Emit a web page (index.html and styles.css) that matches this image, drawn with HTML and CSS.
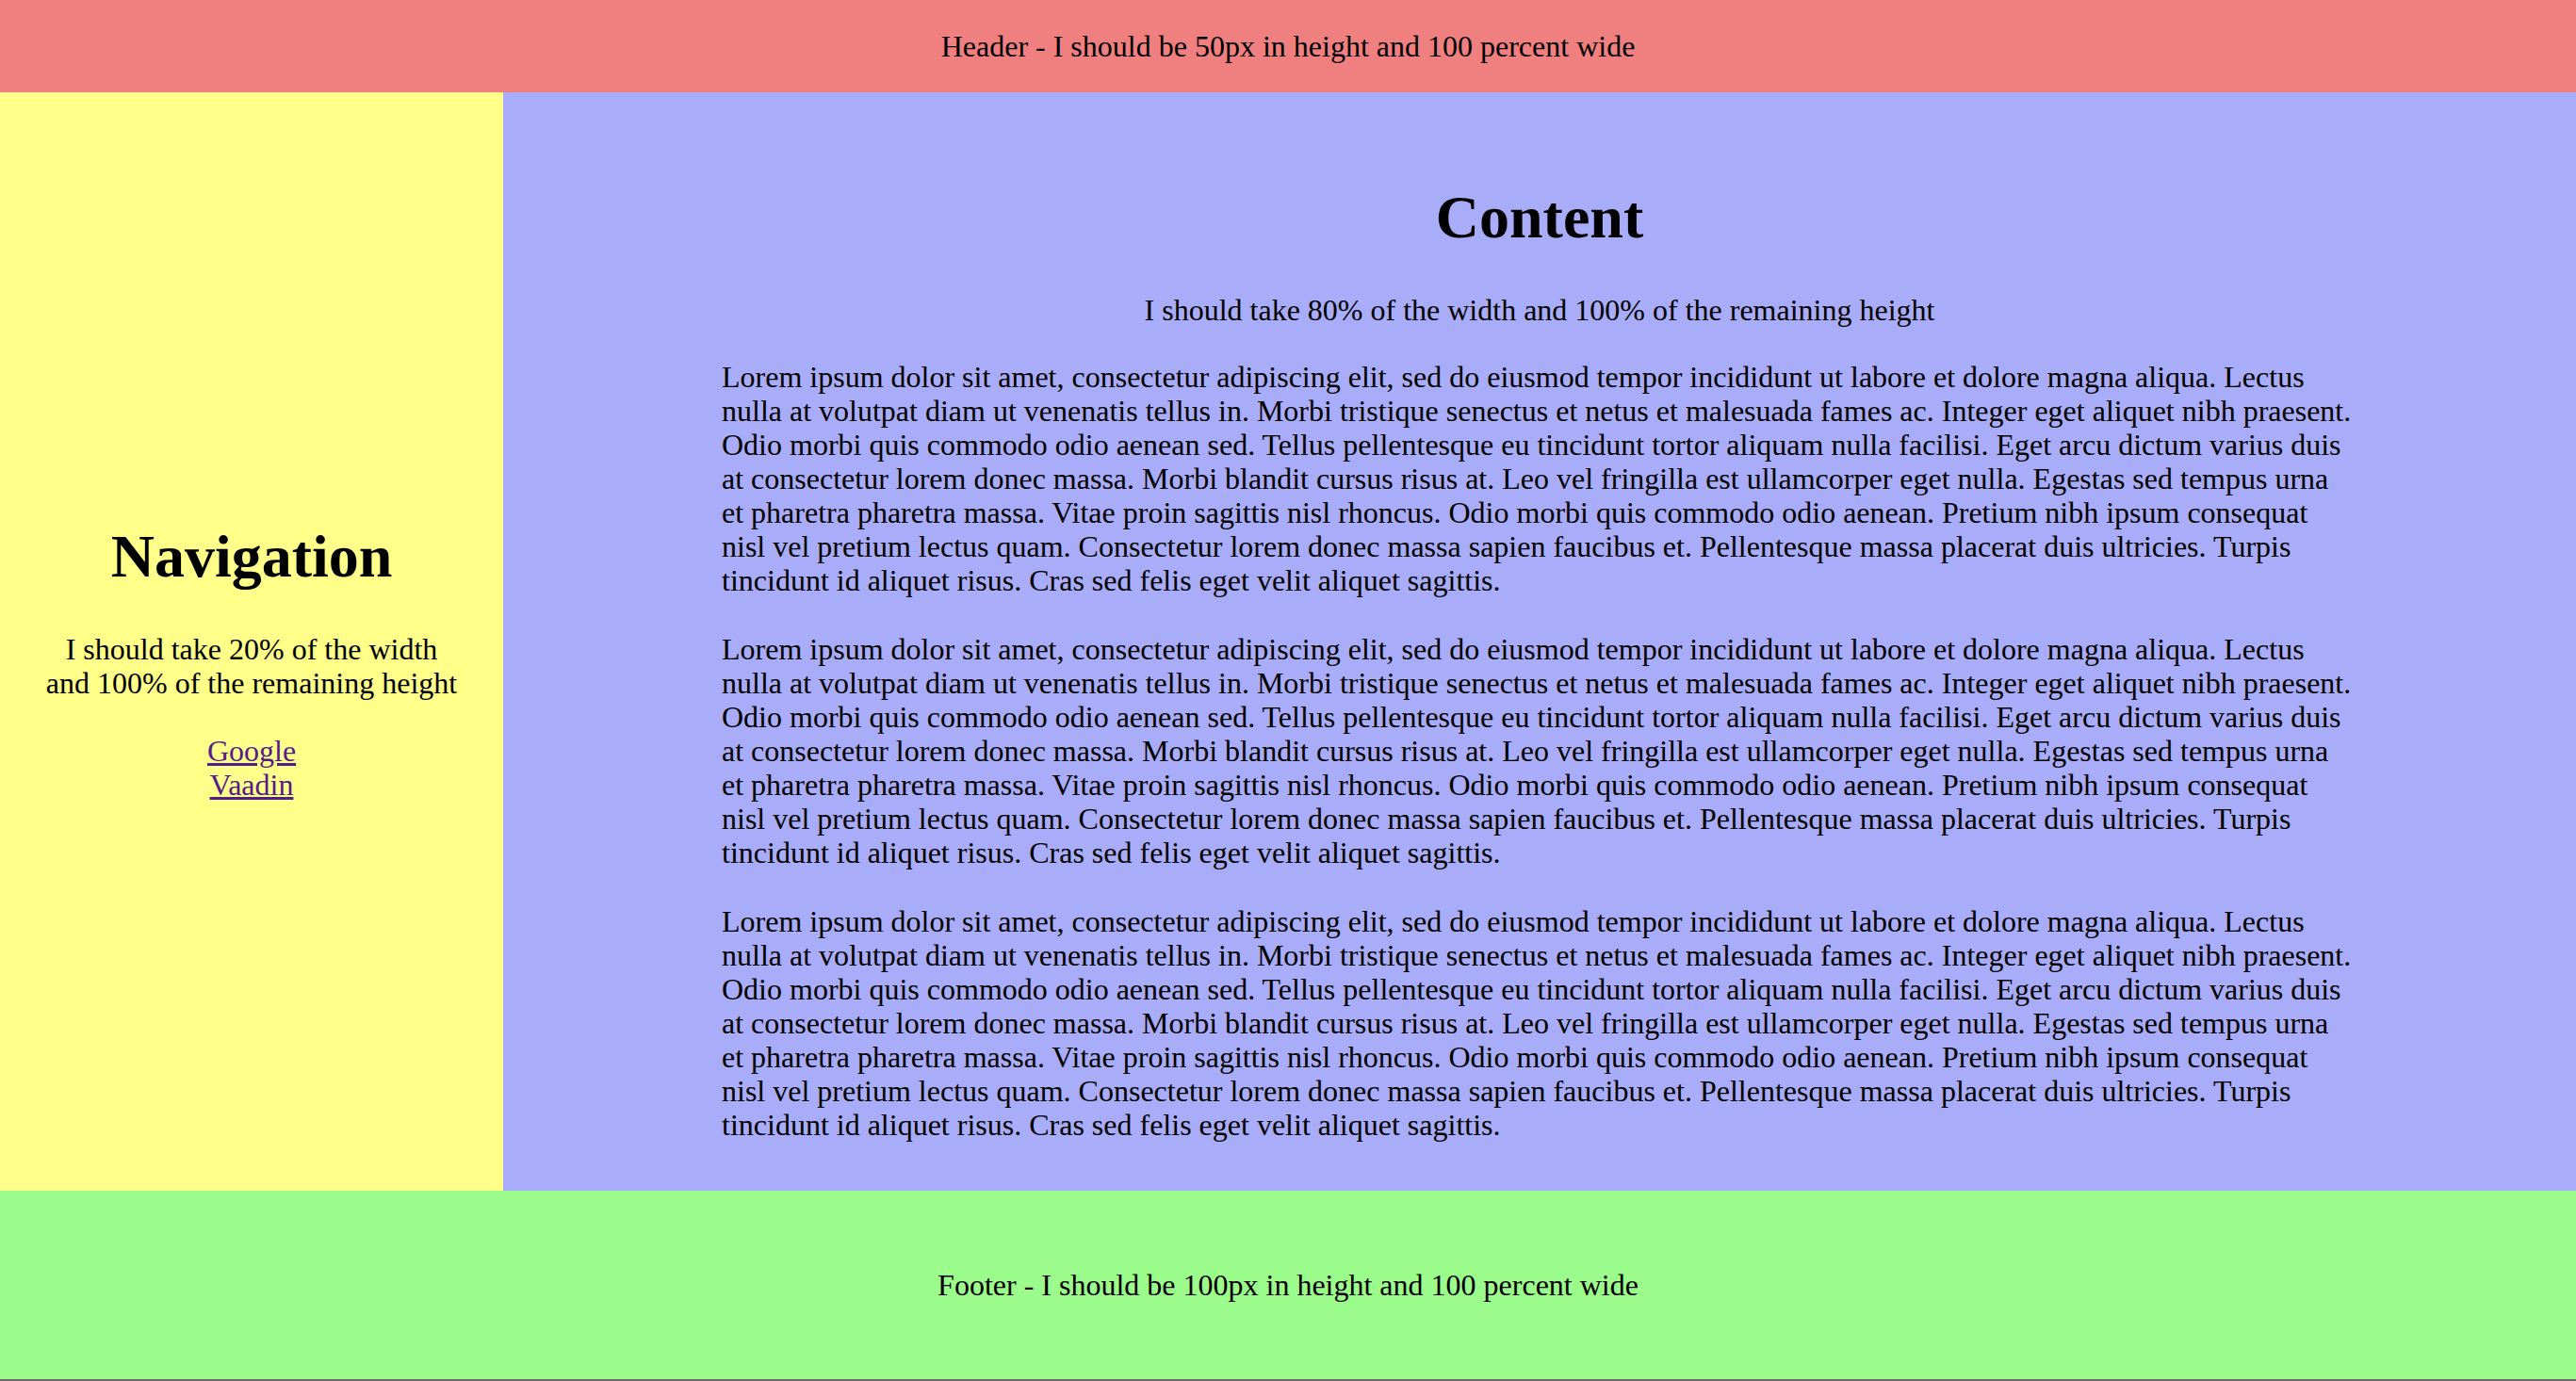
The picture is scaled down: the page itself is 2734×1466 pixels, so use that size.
FILE: index.html
```html
<!DOCTYPE html>
<html lang="en">
<head>
<meta charset="utf-8">
<title>Layout</title>
<link rel="stylesheet" href="styles.css">
</head>
<body>
<div class="page">
  <header class="header">Header - I should be 50px in height and 100 percent wide</header>
  <div class="middle">
    <nav class="nav">
      <h1 class="title">Navigation</h1>
      <p class="nav-text">I should take 20% of the width and 100% of the remaining height</p>
      <div class="links">
        <a class="link" href="#">Google</a>
        <a class="link" href="#">Vaadin</a>
      </div>
    </nav>
    <main class="content">
      <h1 class="title">Content</h1>
      <p class="subtitle">I should take 80% of the width and 100% of the remaining height</p>
      <p class="para">Lorem ipsum dolor sit amet, consectetur adipiscing elit, sed do eiusmod tempor incididunt ut labore et dolore magna aliqua. Lectus nulla at volutpat diam ut venenatis tellus in. Morbi tristique senectus et netus et malesuada fames ac. Integer eget aliquet nibh praesent. Odio morbi quis commodo odio aenean sed. Tellus pellentesque eu tincidunt tortor aliquam nulla facilisi. Eget arcu dictum varius duis at consectetur lorem donec massa. Morbi blandit cursus risus at. Leo vel fringilla est ullamcorper eget nulla. Egestas sed tempus urna et pharetra pharetra massa. Vitae proin sagittis nisl rhoncus. Odio morbi quis commodo odio aenean. Pretium nibh ipsum consequat nisl vel pretium lectus quam. Consectetur lorem donec massa sapien faucibus et. Pellentesque massa placerat duis ultricies. Turpis tincidunt id aliquet risus. Cras sed felis eget velit aliquet sagittis.</p>
      <p class="para">Lorem ipsum dolor sit amet, consectetur adipiscing elit, sed do eiusmod tempor incididunt ut labore et dolore magna aliqua. Lectus nulla at volutpat diam ut venenatis tellus in. Morbi tristique senectus et netus et malesuada fames ac. Integer eget aliquet nibh praesent. Odio morbi quis commodo odio aenean sed. Tellus pellentesque eu tincidunt tortor aliquam nulla facilisi. Eget arcu dictum varius duis at consectetur lorem donec massa. Morbi blandit cursus risus at. Leo vel fringilla est ullamcorper eget nulla. Egestas sed tempus urna et pharetra pharetra massa. Vitae proin sagittis nisl rhoncus. Odio morbi quis commodo odio aenean. Pretium nibh ipsum consequat nisl vel pretium lectus quam. Consectetur lorem donec massa sapien faucibus et. Pellentesque massa placerat duis ultricies. Turpis tincidunt id aliquet risus. Cras sed felis eget velit aliquet sagittis.</p>
      <p class="para">Lorem ipsum dolor sit amet, consectetur adipiscing elit, sed do eiusmod tempor incididunt ut labore et dolore magna aliqua. Lectus nulla at volutpat diam ut venenatis tellus in. Morbi tristique senectus et netus et malesuada fames ac. Integer eget aliquet nibh praesent. Odio morbi quis commodo odio aenean sed. Tellus pellentesque eu tincidunt tortor aliquam nulla facilisi. Eget arcu dictum varius duis at consectetur lorem donec massa. Morbi blandit cursus risus at. Leo vel fringilla est ullamcorper eget nulla. Egestas sed tempus urna et pharetra pharetra massa. Vitae proin sagittis nisl rhoncus. Odio morbi quis commodo odio aenean. Pretium nibh ipsum consequat nisl vel pretium lectus quam. Consectetur lorem donec massa sapien faucibus et. Pellentesque massa placerat duis ultricies. Turpis tincidunt id aliquet risus. Cras sed felis eget velit aliquet sagittis.</p>
    </main>
  </div>
  <footer class="footer">Footer - I should be 100px in height and 100 percent wide</footer>
</div>
</body>
</html>
```

FILE: styles.css
```css
html, body {
  margin: 0;
  padding: 0;
}

body {
  font-family: "Liberation Serif", "Times New Roman", serif;
  font-size: 32px;
  line-height: 36px;
  color: #000;
}

.page {
  display: flex;
  flex-direction: column;
  height: 1466px;
}

.header {
  flex: 0 0 98px;
  display: flex;
  align-items: center;
  justify-content: center;
  background: #f08080;
}

.middle {
  flex: 1 1 auto;
  display: flex;
  min-height: 0;
}

.nav {
  flex: 0 0 534px;
  box-sizing: border-box;
  padding: 0 46px;
  display: flex;
  flex-direction: column;
  justify-content: center;
  text-align: center;
  background: #ffff8a;
}

.content {
  flex: 1 1 auto;
  display: flex;
  flex-direction: column;
  justify-content: center;
  align-items: center;
  text-align: center;
  background: #a9acf8;
}

.title {
  font-size: 64px;
  line-height: 74px;
  font-weight: bold;
  margin: 43px 0;
}

.nav-text {
  margin: 0 0 36px;
}

.links {
  display: flex;
  flex-direction: column;
  align-items: center;
}

.link {
  color: #551a8b;
  text-decoration: underline;
}

.subtitle {
  margin: 0 0 35px;
}

.para {
  width: 1736px;
  margin: 0 0 37px;
  text-align: left;
}

.para:last-child {
  margin-bottom: 0;
}

.footer {
  flex: 0 0 200px;
  display: flex;
  align-items: center;
  justify-content: center;
  background: #9bfb8b;
  border-bottom: 2px solid #6b6b6b;
}
```
